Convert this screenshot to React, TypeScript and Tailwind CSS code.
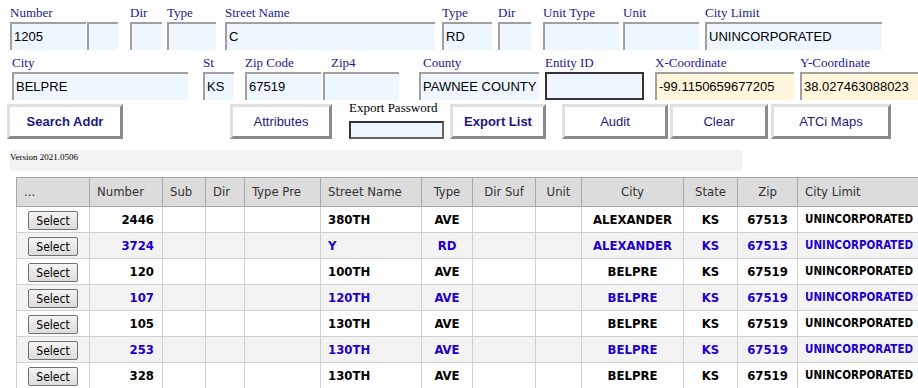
import React from "react";

const serif = "font-['Liberation_Serif','Times_New_Roman',serif]";
const arial = "font-['Liberation_Sans',Arial,sans-serif]";
const grid = "font-['DejaVu_Sans_Condensed','DejaVu_Sans',sans-serif]";

type FieldProps = {
  label: string;
  width: string;
  value?: string;
  ml: string;
  labelPad?: string;
  variant?: "blue" | "cream" | "dark";
};

function Field({ label, width, value = "", ml, labelPad = "", variant = "blue" }: FieldProps) {
  let box = "border-t-2 border-l-2 border-[#a0a0a0] bg-[#eef6ff]";
  if (variant === "cream") box = "border-t-2 border-l-2 border-[#a0a0a0] bg-[#fff6dc]";
  if (variant === "dark") box = "border-2 border-[#333] bg-[#eef6ff]";
  return (
    <div className={`${ml} shrink-0 flex flex-col`}>
      <div className={`${serif} ${labelPad} h-[18px] text-[13px] leading-[18px] text-[#1a1a8a]`}>{label}</div>
      <div
        className={`${width} ${box} ${arial} h-[28px] pl-[2px] flex items-center text-[13px] text-black whitespace-nowrap overflow-hidden`}
      >
        {value}
      </div>
    </div>
  );
}

function Btn({ label, width, ml, bold = false }: { label: string; width: string; ml: string; bold?: boolean }) {
  return (
    <button
      className={`${ml} ${width} ${arial} ${bold ? "font-bold" : ""} mt-[4px] h-[35px] shrink-0 bg-white border-[3px] border-[#e0e0e0] border-b-[#8a8a8a] border-r-[#8a8a8a] text-[13px] text-[#1a1a7a]`}
    >
      {label}
    </button>
  );
}

const cols = [
  { h: "...", w: 73, align: "left" },
  { h: "Number", w: 73, align: "left" },
  { h: "Sub", w: 43, align: "left" },
  { h: "Dir", w: 39, align: "left" },
  { h: "Type Pre", w: 76, align: "left" },
  { h: "Street Name", w: 101, align: "left" },
  { h: "Type", w: 51, align: "center" },
  { h: "Dir Suf", w: 63, align: "center" },
  { h: "Unit", w: 46, align: "center" },
  { h: "City", w: 102, align: "center" },
  { h: "State", w: 54, align: "center" },
  { h: "Zip", w: 60, align: "center" },
  { h: "City Limit", w: 130, align: "left" },
];

const rows = [
  { num: "2446", street: "380TH", type: "AVE", city: "ALEXANDER", zip: "67513" },
  { num: "3724", street: "Y", type: "RD", city: "ALEXANDER", zip: "67513" },
  { num: "120", street: "100TH", type: "AVE", city: "BELPRE", zip: "67519" },
  { num: "107", street: "120TH", type: "AVE", city: "BELPRE", zip: "67519" },
  { num: "105", street: "130TH", type: "AVE", city: "BELPRE", zip: "67519" },
  { num: "253", street: "130TH", type: "AVE", city: "BELPRE", zip: "67519" },
  { num: "328", street: "130TH", type: "AVE", city: "BELPRE", zip: "67519" },
];

export default function App() {
  return (
    <div className="w-[918px] h-[388px] overflow-hidden bg-white">
      {/* first line of fields */}
      <div className="flex pt-[4px]">
        <div className="ml-[10px] shrink-0 flex flex-col">
          <div className={`${serif} h-[18px] text-[13px] leading-[18px] text-[#1a1a8a]`}>Number</div>
          <div className="flex">
            <div className={`${arial} w-[76px] h-[28px] pl-[2px] flex items-center border-t-2 border-l-2 border-[#a0a0a0] bg-[#eef6ff] text-[13px]`}>
              1205
            </div>
            <div className="ml-[1px] w-[31px] h-[28px] border-t-2 border-l-2 border-[#a0a0a0] bg-[#eef6ff]" />
          </div>
        </div>
        <Field label="Dir" width="w-[32px]" ml="ml-[12px]" />
        <Field label="Type" width="w-[49px]" ml="ml-[5px]" />
        <Field label="Street Name" width="w-[210px]" ml="ml-[9px]" value="C" />
        <Field label="Type" width="w-[50px]" ml="ml-[7px]" value="RD" />
        <Field label="Dir" width="w-[33px]" ml="ml-[6px]" />
        <Field label="Unit Type" width="w-[76px]" ml="ml-[12px]" />
        <Field label="Unit" width="w-[76px]" ml="ml-[4px]" />
        <Field label="City Limit" width="w-[177px]" ml="ml-[6px]" value="UNINCORPORATED" />
      </div>

      {/* second line of fields */}
      <div className="flex mt-[4px]">
        <Field label="City" width="w-[176px]" ml="ml-[12px]" value="BELPRE" />
        <Field label="St" width="w-[31px]" ml="ml-[15px]" value="KS" />
        <Field label="Zip Code" width="w-[76px]" ml="ml-[11px]" value="67519" />
        <Field label="Zip4" width="w-[76px]" ml="ml-[2px]" labelPad="pl-[8px]" />
        <Field label="County" width="w-[120px]" ml="ml-[20px]" labelPad="pl-[4px]" value="PAWNEE COUNTY" />
        <Field label="Entity ID" width="w-[99px]" ml="ml-[6px]" variant="dark" />
        <Field label="X-Coordinate" width="w-[139px]" ml="ml-[11px]" variant="cream" value="-99.1150659677205" />
        <Field label="Y-Coordinate" width="w-[139px]" ml="ml-[6px]" variant="cream" value="38.027463088023" />
      </div>

      {/* buttons */}
      <div className="flex items-start">
        <Btn label="Search Addr" width="w-[116px]" ml="ml-[7px]" bold />
        <Btn label="Attributes" width="w-[102px]" ml="ml-[107px]" />
        <div className="ml-[17px] w-[95px] shrink-0 flex flex-col">
          <div className={`${serif} h-[21px] text-[13px] leading-[16px] text-black whitespace-nowrap`}>Export Password</div>
          <div className="h-[18px] border-2 border-[#333] border-b-[#666] border-r-[#666] bg-[#eef6ff]" />
        </div>
        <Btn label="Export List" width="w-[96px]" ml="ml-[6px]" bold />
        <Btn label="Audit" width="w-[106px]" ml="ml-[16px]" />
        <Btn label="Clear" width="w-[98px]" ml="ml-[2px]" />
        <Btn label="ATCi Maps" width="w-[120px]" ml="ml-[3px]" />
      </div>

      <div className={`${serif} ml-[10px] mt-[11px] w-[732px] h-[21px] bg-[#f3f3f3] text-[9px] leading-[12px] pt-[1px] text-black`}>
        Version 2021.0506
      </div>

      <table className={`${grid} ml-[16px] mt-[6px] table-fixed border-collapse w-[911px]`}>
        <colgroup>
          {cols.map((c, i) => (
            <col key={i} style={{ width: c.w }} />
          ))}
        </colgroup>
        <thead>
          <tr className="h-[29px] bg-[#dcdcdc]">
            {cols.map((c, i) => (
              <th
                key={i}
                className={`border border-[#a8a8a8] font-normal text-[13px] text-[#333] px-[7px] whitespace-nowrap ${
                  c.align === "center" ? "text-center" : "text-left"
                }`}
              >
                {c.h}
              </th>
            ))}
          </tr>
        </thead>
        <tbody>
          {rows.map((r, i) => {
            const alt = i % 2 === 1;
            const tone = alt ? "bg-[#f3f3f3] text-[#2200cc]" : "bg-white text-black";
            const td = "border border-[#d0d0d0] font-bold whitespace-nowrap";
            return (
              <tr key={i} className={`h-[26px] ${tone}`}>
                <td className={`${td} text-center`}>
                  <button className="w-[50px] h-[19px] rounded-[2px] border border-[#707070] bg-gradient-to-b from-[#f4f4f4] to-[#dcdcdc] text-[12px] font-normal text-black leading-none">
                    Select
                  </button>
                </td>
                <td className={`${td} text-[13px] text-right pr-[8px]`}>{r.num}</td>
                <td className={td} />
                <td className={td} />
                <td className={td} />
                <td className={`${td} text-[13px] text-left pl-[7px]`}>{r.street}</td>
                <td className={`${td} text-[13px] text-center`}>{r.type}</td>
                <td className={td} />
                <td className={td} />
                <td className={`${td} text-[13px] text-center`}>{r.city}</td>
                <td className={`${td} text-[13px] text-center`}>KS</td>
                <td className={`${td} text-[13px] text-center`}>{r.zip}</td>
                <td className={`${td} text-[11.5px] text-left pl-[7px]`}>UNINCORPORATED</td>
              </tr>
            );
          })}
        </tbody>
      </table>
    </div>
  );
}
